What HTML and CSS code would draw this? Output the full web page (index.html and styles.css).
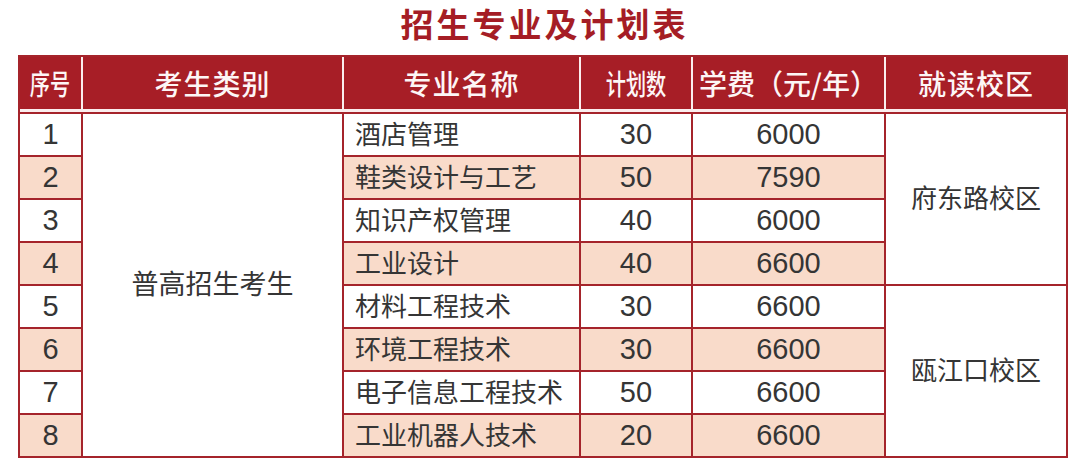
FILE: index.html
```html
<!DOCTYPE html>
<html lang="zh-CN">
<head>
<meta charset="utf-8">
<title>招生专业及计划表</title>
<link rel="stylesheet" href="styles.css">
</head>
<body>
<div class="page">
  <h1 class="title">招生专业及计划表</h1>
  <table class="plan">
    <thead>
      <tr class="head-row">
        <th class="c-no"><span class="narrow">序号</span></th>
        <th class="c-type">考生类别</th>
        <th class="c-major">专业名称</th>
        <th class="c-count"><span class="narrow">计划数</span></th>
        <th class="c-fee">学费（元/年）</th>
        <th class="c-campus">就读校区</th>
      </tr>
    </thead>
    <tbody>
      <tr class="odd">
        <td class="first">1</td>
        <td class="span-cell type" rowspan="8">普高招生考生</td>
        <td class="major">酒店管理</td>
        <td>30</td>
        <td>6000</td>
        <td class="span-cell" rowspan="4">府东路校区</td>
      </tr>
      <tr class="even">
        <td class="first">2</td>
        <td class="major">鞋类设计与工艺</td>
        <td>50</td>
        <td>7590</td>
      </tr>
      <tr class="odd">
        <td class="first">3</td>
        <td class="major">知识产权管理</td>
        <td>40</td>
        <td>6000</td>
      </tr>
      <tr class="even">
        <td class="first">4</td>
        <td class="major">工业设计</td>
        <td>40</td>
        <td>6600</td>
      </tr>
      <tr class="odd">
        <td class="first">5</td>
        <td class="major">材料工程技术</td>
        <td>30</td>
        <td>6600</td>
        <td class="span-cell" rowspan="4">瓯江口校区</td>
      </tr>
      <tr class="even">
        <td class="first">6</td>
        <td class="major">环境工程技术</td>
        <td>30</td>
        <td>6600</td>
      </tr>
      <tr class="odd">
        <td class="first">7</td>
        <td class="major">电子信息工程技术</td>
        <td>50</td>
        <td>6600</td>
      </tr>
      <tr class="even">
        <td class="first">8</td>
        <td class="major">工业机器人技术</td>
        <td>20</td>
        <td>6600</td>
      </tr>
    </tbody>
  </table>
</div>
</body>
</html>
```

FILE: styles.css
```css
html, body {
  margin: 0;
  padding: 0;
  background: #ffffff;
}

.page {
  width: 1080px;
  padding: 0 0 0 18px;
  box-sizing: border-box;
  font-family: "Liberation Sans", "Noto Sans CJK SC", sans-serif;
}

.title {
  width: 1050px;
  height: 55px;
  margin: 0;
  padding: 2px 0 0 3px;
  box-sizing: border-box;
  text-align: center;
  font-family: "Noto Sans CJK SC", sans-serif;
  font-weight: 700;
  font-size: 33px;
  line-height: 42px;
  letter-spacing: 3px;
  color: #a51d25;
}

.plan {
  width: 1050px;
  table-layout: fixed;
  border-collapse: separate;
  border-spacing: 0;
  border: 2px solid #a5242b;
  box-sizing: border-box;
}

.plan th,
.plan td {
  padding: 0;
  box-sizing: border-box;
  text-align: center;
  vertical-align: middle;
  line-height: 1;
}

.head-row {
  height: 55px;
}

.plan th {
  background: #a71e26;
  color: #fdf6f6;
  font-family: "Noto Sans CJK SC", sans-serif;
  font-weight: 500;
  font-size: 28px;
  letter-spacing: 1px;
  border-left: 2px solid #fbeeee;
  border-bottom: 3px solid #fbeeee;
}

.plan th.c-no { width: 61px; border-left: none; }
.plan th.c-type { width: 261px; }
.plan th.c-major { width: 237px; }
.plan th.c-count { width: 112px; }
.plan th.c-fee { width: 193px; letter-spacing: 0; }
.plan th.c-campus { width: 182px; }

.narrow {
  display: inline-block;
  transform: scaleX(0.72);
  letter-spacing: 0;
}

.plan tbody tr {
  height: 43px;
}

.plan td {
  border-left: 2px solid #a5242b;
  border-top: 2px solid #a5242b;
  color: #353535;
  font-size: 29px;
}

.plan td.first {
  border-left: none;
}

.plan tr.even td {
  background: #f9dbca;
}

.plan tr.even td.span-cell,
.plan td.span-cell {
  background: #ffffff;
  font-size: 26px;
}

.plan td.type {
  font-size: 27px;
}

.plan td.major {
  text-align: left;
  padding-left: 11px;
  font-size: 26px;
}
```
